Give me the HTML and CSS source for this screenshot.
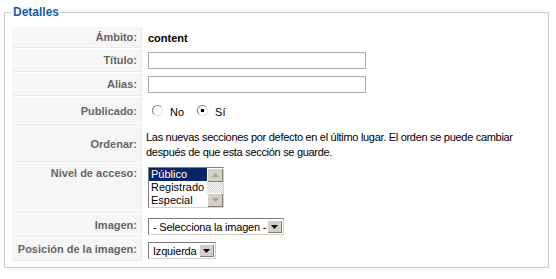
FILE: index.html
```html
<!DOCTYPE html>
<html lang="es">
  <head>
    <meta charset="UTF-8" />
    <title>Detalles de la sección</title>
    <link rel="stylesheet" href="styles.css">
  </head>
  <body>
    <fieldset class="adminform">
      <legend>Detalles</legend>
      <table class="admintable">
        <tr>
          <td class="key">Ámbito:</td>
          <td class="value"><strong>content</strong></td>
        </tr>
        <tr>
          <td class="key">Título:</td>
          <td class="value"><input class="inputbox" type="text" /></td>
        </tr>
        <tr>
          <td class="key">Alias:</td>
          <td class="value"><input class="inputbox" type="text" /></td>
        </tr>
        <tr>
          <td class="key">Publicado:</td>
          <td class="value">
            <div class="radio-group">
              <label class="radio"><input type="radio" name="published" /> No</label>
              <label class="radio"><input type="radio" name="published" checked /> Sí</label>
            </div>
          </td>
        </tr>
        <tr>
          <td class="key">Ordenar:</td>
          <td class="value desc">
            Las nuevas secciones por defecto en el último lugar. El orden se puede cambiar
            <br />después de que esta sección se guarde.
          </td>
        </tr>
        <tr>
          <td class="key top">Nivel de acceso:</td>
          <td class="value">
            <div class="listbox">
              <ul class="listbox-items">
                <li class="selected">Público</li>
                <li>Registrado</li>
                <li>Especial</li>
              </ul>
              <div class="scrollbar">
                <span class="scroll-btn">
                  <svg width="7" height="4" viewBox="0 0 7 4"><path d="M3.5 0L7 4H0z" fill="#a3a3a3"/></svg>
                </span>
                <span class="scroll-track"></span>
                <span class="scroll-btn">
                  <svg width="7" height="4" viewBox="0 0 7 4"><path d="M0 0h7L3.5 4z" fill="#a3a3a3"/></svg>
                </span>
              </div>
            </div>
          </td>
        </tr>
        <tr>
          <td class="key">Imagen:</td>
          <td class="value">
            <div class="dropdown dropdown-image">
              <span class="dropdown-text">- Selecciona la imagen -</span>
              <span class="dropdown-btn">
                <svg width="7" height="4" viewBox="0 0 7 4"><path d="M0 0h7L3.5 4z" fill="#000"/></svg>
              </span>
            </div>
          </td>
        </tr>
        <tr>
          <td class="key">Posición de la imagen:</td>
          <td class="value">
            <div class="dropdown dropdown-position">
              <span class="dropdown-text">Izquierda</span>
              <span class="dropdown-btn">
                <svg width="7" height="4" viewBox="0 0 7 4"><path d="M0 0h7L3.5 4z" fill="#000"/></svg>
              </span>
            </div>
          </td>
        </tr>
      </table>
    </fieldset>
  </body>
</html>
```

FILE: styles.css
```css
body {
  margin: 0;
  background-color: #fff;
  font-family: "Liberation Sans", Arial, sans-serif;
  font-size: 11px;
  color: #333;
}
.adminform {
  margin: 4px 7px 0 4px;
  padding: 6px 6px 5px;
  border: 1px solid #ccc;
}
.adminform legend {
  padding: 0 2px 0 1px;
  margin-left: 1px;
  font-size: 12px;
  line-height: 16px;
  font-weight: bold;
  color: #1a5aa5;
}
.admintable {
  width: 100%;
  border-spacing: 1px;
  border-collapse: separate;
}
.admintable td {
  padding: 3px 4px;
  line-height: 14px;
  vertical-align: middle;
}
.admintable td.key {
  width: 121px;
  background-color: #f6f6f6;
  border-bottom: 1px solid #e9e9e9;
  border-right: 1px solid #e9e9e9;
  text-align: right;
  font-weight: bold;
  color: #666;
  white-space: nowrap;
}
.admintable td.key.top {
  vertical-align: top;
}
.admintable td.value {
  padding-left: 5px;
  color: #000;
}
.admintable td.desc {
  padding: 3px 3px 2px;
  line-height: 15px;
  white-space: nowrap;
  letter-spacing: -0.3px;
}
.inputbox {
  display: block;
  box-sizing: border-box;
  width: 218px;
  height: 17px;
  margin: 0;
  border: 1px solid #a5acb2;
  padding: 0 2px;
  font: inherit;
}
.radio-group {
  display: flex;
  align-items: center;
  gap: 9px;
  height: 23px;
}
.radio {
  display: flex;
  align-items: flex-end;
  gap: 7px;
  line-height: 13px;
}
.radio input {
  appearance: none;
  width: 11px;
  height: 11px;
  margin: 0 0 3px 4px;
  border-radius: 50%;
  border: 1px solid;
  border-color: #808080 #e0e0e0 #e0e0e0 #808080;
  background: #fff;
}
.radio input:checked {
  background: radial-gradient(circle, #000 0 1.5px, #fff 2.1px);
}
.listbox {
  display: flex;
  width: 74px;
  height: 39px;
  border: 1px solid;
  border-color: #808080 #d4d0c8 #d4d0c8 #808080;
  margin: 1px 0 2px;
}
.listbox-items {
  flex: 1;
  list-style: none;
  margin: 0;
  padding: 0;
  font-size: 11px;
}
.listbox-items li {
  height: 13px;
  line-height: 13px;
  padding-left: 2px;
}
.listbox-items li.selected {
  background-color: #0a246a;
  color: #fff;
}
.scrollbar {
  display: flex;
  flex-direction: column;
  width: 16px;
}
.scroll-btn {
  display: flex;
  align-items: center;
  justify-content: center;
  height: 14px;
  background-color: #d4d0c8;
  box-shadow: inset 1px 1px #fff, inset -1px -1px #808080;
}
.scroll-track {
  flex: 1;
  background-color: #e8e6e1;
  background-image: repeating-conic-gradient(#fff 0 25%, #d4d0c8 0 50%);
  background-size: 2px 2px;
}
.dropdown {
  display: flex;
  align-items: center;
  height: 17px;
  box-sizing: border-box;
  border: 1px solid;
  border-color: #808080 #d4d0c8 #d4d0c8 #808080;
  padding: 0 1px 0 4px;
  font-size: 11px;
  color: #000;
  margin-top: 1px;
  margin-bottom: -1px;
}
.dropdown-image {
  width: 136px;
}
.dropdown-position {
  width: 68px;
}
.dropdown-text {
  flex: 1;
  white-space: nowrap;
  letter-spacing: -0.2px;
  overflow: hidden;
}
.dropdown-btn {
  display: flex;
  align-items: center;
  justify-content: center;
  width: 15px;
  height: 13px;
  background-color: #d4d0c8;
  box-shadow: inset 1px 1px #fff, inset -1px -1px #808080;
}
```
